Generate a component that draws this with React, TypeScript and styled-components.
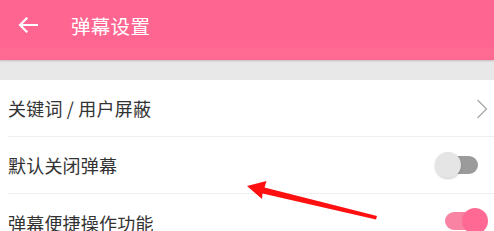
import React from "react";
import styled, { createGlobalStyle } from "styled-components";

const Global = createGlobalStyle`
  html, body { margin: 0; padding: 0; background: #ffffff; }
  body { font-family: "Noto Sans CJK SC", "Noto Sans", sans-serif; overflow: hidden; }
`;

const Page = styled.div`
  position: relative;
  width: 494px;
  height: 231px;
  overflow: hidden;
  background: #ffffff;
`;

const Header = styled.header`
  height: 60px;
  display: flex;
  align-items: center;
  padding-left: 18px;
  padding-bottom: 10px;
  box-sizing: border-box;
  background: linear-gradient(
    to bottom,
    #ff6591 0px,
    #ff6591 47px,
    #ff6c93 50px,
    #ff6a92 57px,
    #fd6690 60px
  );
  position: relative;
  z-index: 1;
  box-shadow: 0 1px 2px rgba(0, 0, 0, 0.18);
`;

const BackButton = styled.div`
  width: 20px;
  height: 16px;
  display: flex;
  color: #ffffff;
  margin-right: 33px;
`;

const Title = styled.h1`
  margin: 0;
  font-size: 19.5px;
  font-weight: 400;
  color: #ffffff;
  letter-spacing: 0.3px;
`;

const GrayBand = styled.div`
  height: 20px;
  background: #e8e8e8;
`;

const List = styled.div`
  display: flex;
  flex-direction: column;
`;

const Row = styled.div<{ $last?: boolean }>`
  height: 57px;
  margin-left: 8px;
  display: flex;
  align-items: center;
  justify-content: space-between;
  border-bottom: ${(p) => (p.$last ? "none" : "1px solid #efefef")};
  box-sizing: border-box;
`;

const Label = styled.span`
  font-size: 18px;
  color: #333333;
  letter-spacing: 0.2px;
`;

const Chevron = styled.div`
  width: 12px;
  height: 22px;
  margin-right: 6px;
  margin-top: 2px;
  display: flex;
`;

const Switch = styled.div<{ $on?: boolean; $offset: number }>`
  position: relative;
  width: 43px;
  height: 26px;
  margin-right: ${(p) => p.$offset}px;
  margin-top: ${(p) => (p.$on ? "-4px" : "0")};
`;

const Track = styled.div<{ $on?: boolean }>`
  position: absolute;
  top: 4px;
  height: 18px;
  border-radius: 9px;
  left: ${(p) => (p.$on ? "0" : "12px")};
  right: ${(p) => (p.$on ? "8px" : "0")};
  background: ${(p) => (p.$on ? "#f883a3" : "#9b9b9b")};
`;

const Knob = styled.div<{ $on?: boolean }>`
  position: absolute;
  top: 0;
  width: 26px;
  height: 26px;
  border-radius: 50%;
  left: ${(p) => (p.$on ? "17px" : "0")};
  background: ${(p) => (p.$on ? "#ff6994" : "#e5e5e5")};
  box-shadow: ${(p) => (p.$on ? "none" : "0 1px 2px rgba(0,0,0,0.2)")};
`;

const Annotation = styled.svg`
  position: absolute;
  left: 0;
  top: 0;
  width: 494px;
  height: 231px;
  pointer-events: none;
`;

const ToggleSwitch: React.FC<{ on?: boolean; offset: number }> = ({ on, offset }) => (
  <Switch $on={on} $offset={offset}>
    <Track $on={on} />
    <Knob $on={on} />
  </Switch>
);

export default function App() {
  return (
    <Page>
      <Global />
      <Header>
        <BackButton>
          <svg width="20" height="16" viewBox="0 0 20 16">
            <path
              d="M19 8H2.5M8.5 1.5L2 8l6.5 6.5"
              fill="none"
              stroke="#ffffff"
              strokeWidth="2.2"
              strokeLinecap="square"
            />
          </svg>
        </BackButton>
        <Title>弹幕设置</Title>
      </Header>
      <GrayBand />
      <List>
        <Row>
          <Label>关键词 / 用户屏蔽</Label>
          <Chevron>
            <svg width="12" height="22" viewBox="0 0 12 22">
              <path d="M1.5 2l9 9-9 9" fill="none" stroke="#a8a8a8" strokeWidth="1.3" />
            </svg>
          </Chevron>
        </Row>
        <Row>
          <Label>默认关闭弹幕</Label>
          <ToggleSwitch offset={16} />
        </Row>
        <Row $last>
          <Label>弹幕便捷操作功能</Label>
          <ToggleSwitch on offset={6} />
        </Row>
      </List>
      <Annotation viewBox="0 0 494 231">
        <polygon
          points="247,186 266.5,181 264.5,187.5 377,216 376,219.5 262.5,193.5 262,199"
          fill="#ff1010"
        />
      </Annotation>
    </Page>
  );
}
